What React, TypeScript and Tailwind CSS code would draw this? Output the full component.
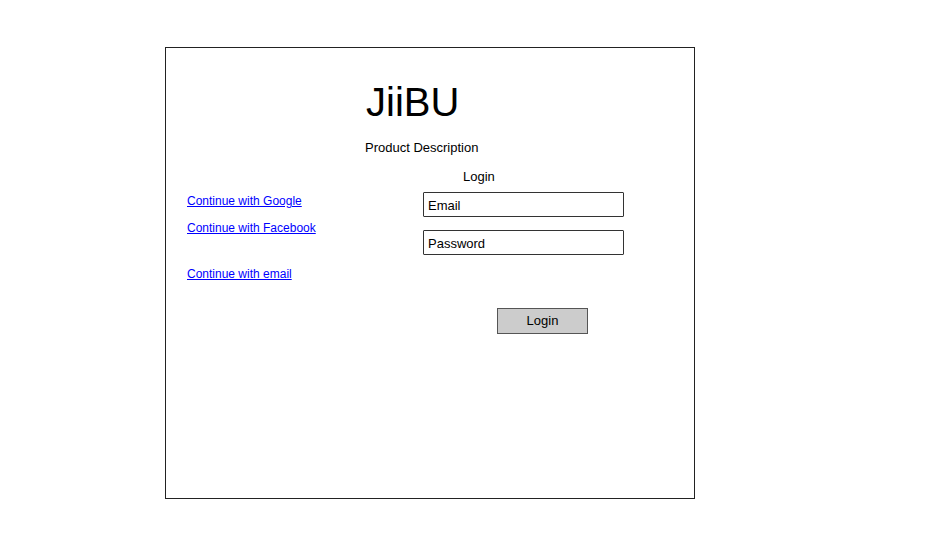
export default function App() {
  const font = "font-['Comic_Sans_MS','Liberation_Sans',sans-serif]"
  return (
    <div className={`w-[946px] h-[559px] bg-white ${font} text-black`}>
      <div className="ml-[165px] pt-[47px]">
        <div className="w-[530px] h-[452px] border border-[#222] bg-white">
          <div className="pl-[200px] pt-[30px] text-[40px] leading-[48px]">JiiBU</div>
          <div className="pl-[199px] mt-[14px] text-[13px] leading-[16px]">Product Description</div>
          <div className="pl-[297px] mt-[13px] text-[13px] leading-[16px]">Login</div>
          <div className="flex mt-[7px]">
            <div className="w-[257px] pl-[21px] pt-[1px] flex flex-col text-[12px] leading-[16px]">
              <a href="#" className="text-[#0000ff] underline">Continue with Google</a>
              <a href="#" className="text-[#0000ff] underline mt-[11px]">Continue with Facebook</a>
              <a href="#" className="text-[#0000ff] underline mt-[30px]">Continue with email</a>
            </div>
            <div className="flex flex-col">
              <div className="w-[201px] h-[25px] border border-[#333] rounded-[1px] px-[4px] pt-[2px] text-[13px] leading-[21px]">Email</div>
              <div className="w-[201px] h-[25px] border border-[#333] rounded-[1px] px-[4px] pt-[2px] mt-[13px] text-[13px] leading-[21px]">Password</div>
              <div className="ml-[74px] mt-[53px] w-[91px] h-[26px] border border-[#555] bg-[#cccccc] text-[13px] leading-[24px] text-center">Login</div>
            </div>
          </div>
        </div>
      </div>
    </div>
  )
}
